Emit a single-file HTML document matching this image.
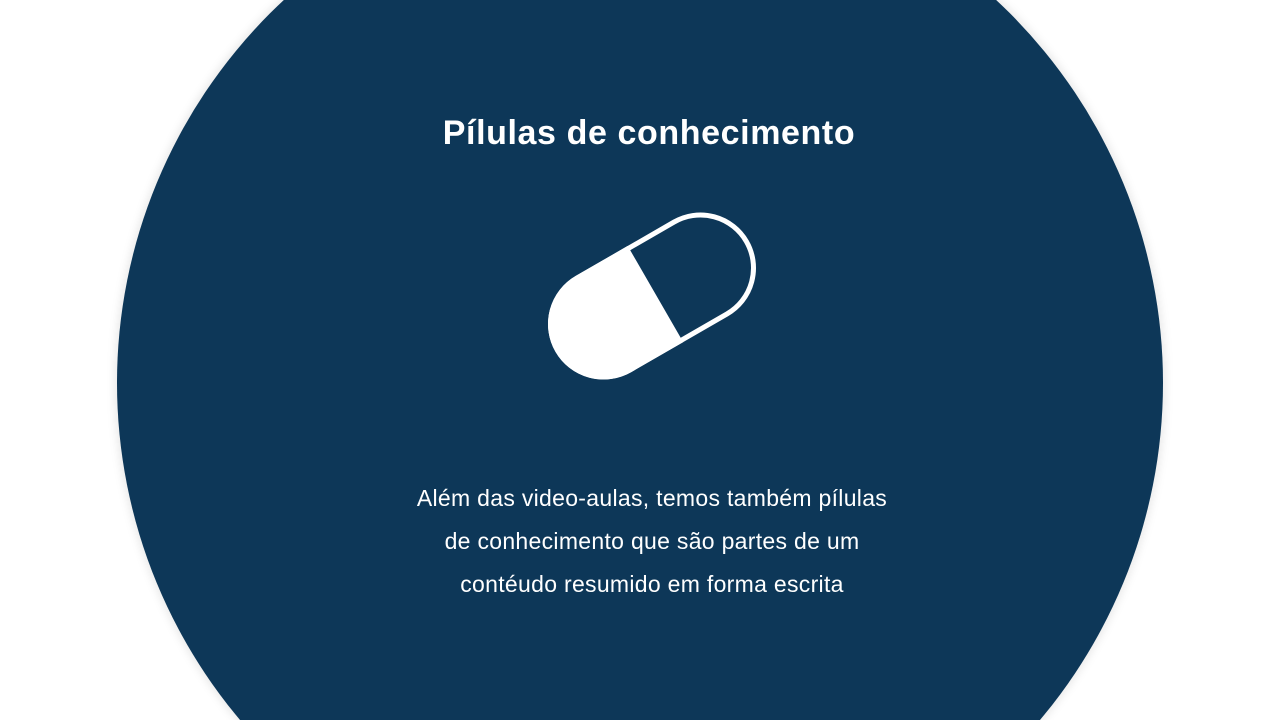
<!DOCTYPE html>
<html><head><meta charset="utf-8"><style>
html,body{margin:0;padding:0;width:1280px;height:720px;overflow:hidden;background:#fff;font-family:"Liberation Sans",sans-serif}
.w{position:relative;width:1280px;height:720px;overflow:hidden}
h1{position:absolute;left:0;width:1280px;box-sizing:border-box;padding-left:18px;top:112px;margin:0;text-align:center;color:#fff;font-size:34px;font-weight:bold;line-height:42px;letter-spacing:0.6px}
p{position:absolute;left:0;width:1280px;box-sizing:border-box;padding-left:24px;top:477px;margin:0;text-align:center;color:#fff;font-size:23px;line-height:43px;letter-spacing:0.3px}
svg{position:absolute;left:0;top:0;display:block}
</style></head><body><div class="w">
<svg width="1280" height="720" viewBox="0 0 1280 720"><defs><filter id="s" x="-5%" y="-5%" width="110%" height="110%"><feGaussianBlur stdDeviation="4"/></filter></defs>
<circle cx="640" cy="383" r="526" fill="rgba(0,0,0,0.08)" filter="url(#s)"/>
<circle cx="640" cy="383" r="523" fill="#0d3758"/>
<g transform="translate(652,296) rotate(-30)">
<path d="M4,-55.5 L-56,-55.5 A55.5,55.5 0 0 0 -56,55.5 L4,55.5 Z" fill="#fff"/>
<rect x="-109" y="-53" width="218" height="106" rx="53" fill="none" stroke="#fff" stroke-width="5"/>
</g></svg>
<h1>Pílulas de conhecimento</h1>
<p>Além das video-aulas, temos também pílulas<br>de conhecimento que são partes de um<br>contéudo resumido em forma escrita</p>
</div></body></html>
